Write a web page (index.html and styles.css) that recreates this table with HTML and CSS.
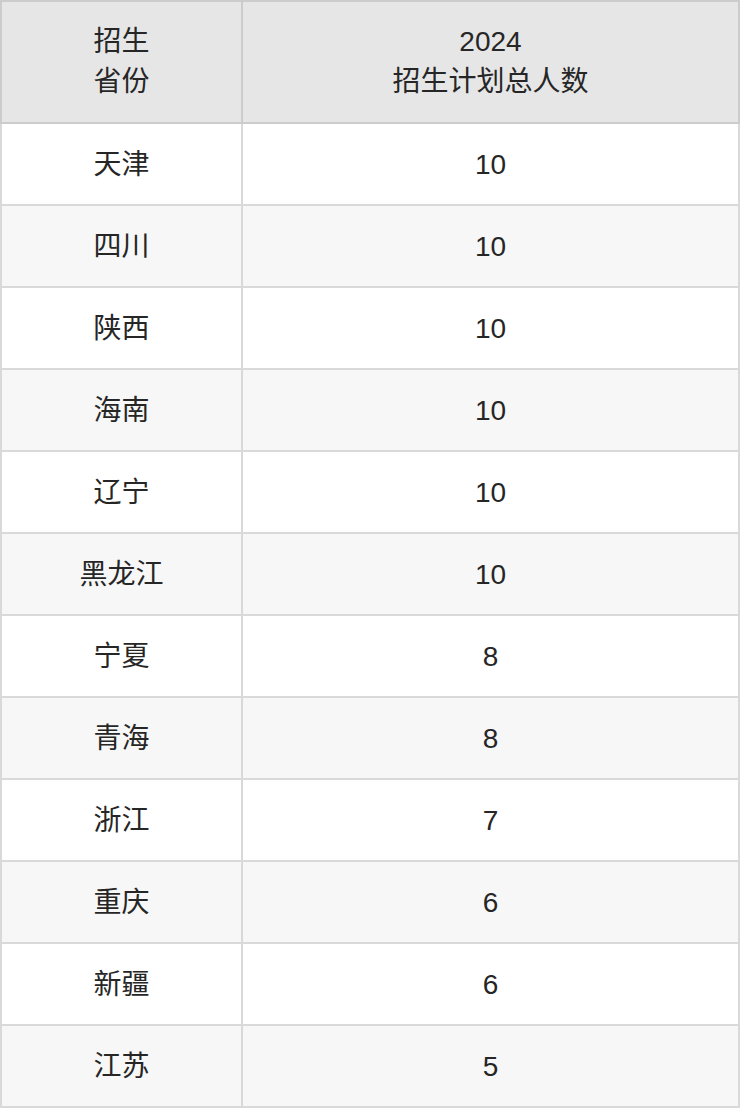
FILE: index.html
```html
<!DOCTYPE html>
<html lang="zh-CN">
<head>
<meta charset="utf-8">
<title>招生计划</title>
<link rel="stylesheet" href="styles.css">
</head>
<body>
<div class="table">
  <div class="cell head c1">招生<br>省份</div>
  <div class="cell head">2024<br>招生计划总人数</div>

  <div class="cell c1">天津</div><div class="cell">10</div>
  <div class="cell c1 alt">四川</div><div class="cell alt">10</div>
  <div class="cell c1">陕西</div><div class="cell">10</div>
  <div class="cell c1 alt">海南</div><div class="cell alt">10</div>
  <div class="cell c1">辽宁</div><div class="cell">10</div>
  <div class="cell c1 alt">黑龙江</div><div class="cell alt">10</div>
  <div class="cell c1">宁夏</div><div class="cell">8</div>
  <div class="cell c1 alt">青海</div><div class="cell alt">8</div>
  <div class="cell c1">浙江</div><div class="cell">7</div>
  <div class="cell c1 alt">重庆</div><div class="cell alt">6</div>
  <div class="cell c1">新疆</div><div class="cell">6</div>
  <div class="cell c1 alt">江苏</div><div class="cell alt">5</div>
</div>
</body>
</html>
```

FILE: styles.css
```css
html, body {
  margin: 0;
  padding: 0;
  background: #ffffff;
}

.table {
  display: grid;
  grid-template-columns: 243px 497px;
  width: 740px;
  font-family: "Liberation Sans", "Noto Sans CJK SC", sans-serif;
  font-size: 28px;
  color: #262626;
}

.cell {
  box-sizing: border-box;
  height: 82px;
  padding-top: 1px;
  line-height: 79px;
  text-align: center;
  border-right: 2px solid #d9d9d9;
  border-bottom: 2px solid #d9d9d9;
  background: #ffffff;
}

.cell.c1 {
  border-left: 2px solid #d9d9d9;
}

.cell.alt {
  background: #f7f7f7;
}

.cell.head {
  height: 124px;
  padding: 20px 0;
  line-height: 40px;
  background: #e6e6e6;
  border-top: 2px solid #cccccc;
  border-right-color: #cccccc;
  border-bottom-color: #cccccc;
}

.cell.head.c1 {
  border-left-color: #cccccc;
}
```
